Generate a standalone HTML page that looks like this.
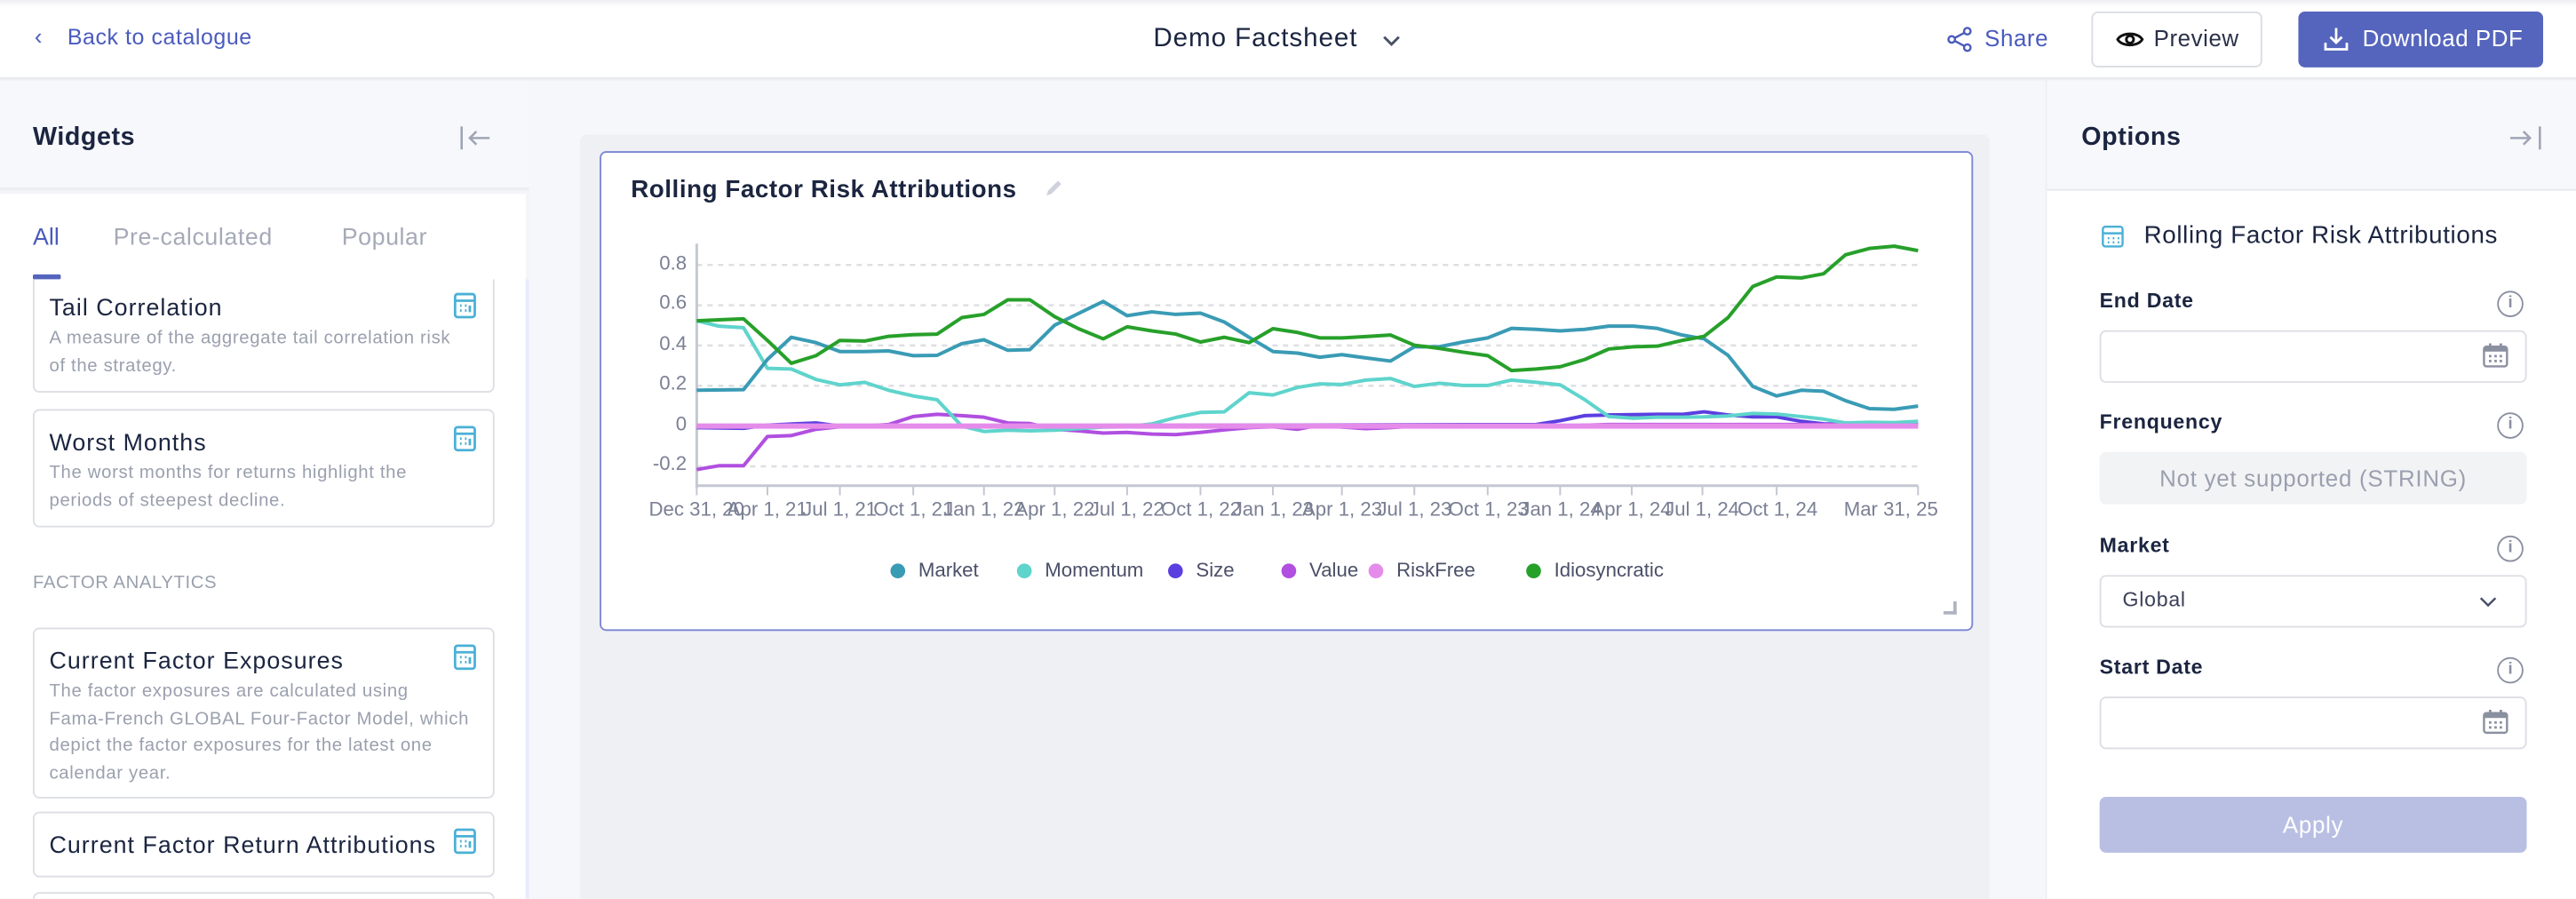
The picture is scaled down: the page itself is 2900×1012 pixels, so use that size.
<!DOCTYPE html>
<html><head><meta charset="utf-8">
<style>
*{box-sizing:border-box;margin:0;padding:0}
html,body{width:2900px;height:1012px;overflow:hidden;background:#f4f5f8}
body{font-family:"Liberation Sans",sans-serif;position:relative;line-height:1.4}
#w{position:absolute;left:0;top:0;width:1568px;height:547px;overflow:hidden;transform:scale(1.84949);transform-origin:0 0;}
.a{position:absolute;white-space:nowrap}
.card{position:absolute;left:20px;width:281px;background:#fff;border:1px solid #dcdee4;border-radius:4px}
.card .t{position:absolute;left:9px;font-size:14.5px;color:#1b2540;letter-spacing:.55px}
.card .d{position:absolute;left:9px;font-size:11px;line-height:16.5px;color:#9aa0ae;white-space:nowrap;letter-spacing:.35px}
.ci{position:absolute;right:10px;top:7px}
.lbl{position:absolute;left:1278px;font-size:12.5px;color:#1b2540;font-weight:bold;letter-spacing:.4px}
.inp{position:absolute;left:1278px;width:260px;height:32px;border:1px solid #dcdee4;border-radius:4px;background:#fff}
.info{position:absolute;left:1520px;width:16px;height:16px;border:1.5px solid #8a90a0;border-radius:50%;font-size:10px;color:#8a90a0;text-align:center;line-height:13px;font-weight:bold}
.xl{position:absolute;top:302px;font-size:12px;color:#7a8094;transform:translateX(-50%);white-space:nowrap}
.yl{position:absolute;left:380px;width:38px;text-align:right;font-size:12px;color:#7a8094}
.lg{position:absolute;top:339px;font-size:12px;color:#4a5068}
.lg i{display:inline-block;width:9px;height:9px;border-radius:50%;margin-right:8px;vertical-align:-1px}
</style></head><body>
<div id="w">
<!-- header -->
<div class="a" style="left:0;top:0;width:1568px;height:48px;background:#fff;border-bottom:1px solid #e6e8ee;box-shadow:0 1px 3px rgba(0,0,0,.05)"></div>
<div class="a" style="left:0;top:0;width:1568px;height:4px;background:linear-gradient(#eeeff2,#fff)"></div>
<div class="a" style="left:21px;top:13px;font-size:14px;color:#4a5bbd">‹</div>
<div class="a" style="left:41px;top:14px;font-size:13.5px;color:#4a5bbd;letter-spacing:.3px">Back to catalogue</div>
<div class="a" style="left:702px;top:13px;font-size:16px;color:#1b2540;letter-spacing:.5px">Demo Factsheet</div>
<svg class="a" style="left:841px;top:21px" width="12" height="8" viewBox="0 0 12 8"><path d="M1.5 1.5L6 6l4.5-4.5" fill="none" stroke="#4a5068" stroke-width="1.6"/></svg>
<svg class="a" style="left:1185px;top:16px" width="16" height="16" viewBox="0 0 16 16" fill="none" stroke="#4a5bbd" stroke-width="1.3"><circle cx="3" cy="8" r="2"/><circle cx="12.5" cy="3" r="2"/><circle cx="12.5" cy="13" r="2"/><path d="M5 7l5.7-3M5 9l5.7 3"/></svg>
<div class="a" style="left:1208px;top:14px;font-size:14px;color:#4a5bbd;letter-spacing:.3px">Share</div>
<div class="a" style="left:1273px;top:7px;width:104px;height:34px;border:1px solid #d9dce3;border-radius:4px;background:#fff"></div>
<svg class="a" style="left:1288px;top:17px" width="17" height="14" viewBox="0 0 17 14" fill="none" stroke="#111" stroke-width="1.6"><path d="M1 7C3.5 2.5 13.5 2.5 16 7C13.5 11.5 3.5 11.5 1 7z"/><circle cx="8.5" cy="7" r="2.2"/></svg>
<div class="a" style="left:1311px;top:14px;font-size:14px;color:#2a3048;letter-spacing:.3px">Preview</div>
<div class="a" style="left:1399px;top:7px;width:149px;height:34px;border-radius:4px;background:#5565bd"></div>
<svg class="a" style="left:1414px;top:16px" width="16" height="16" viewBox="0 0 16 16" fill="none" stroke="#fff" stroke-width="1.5"><path d="M8 1v9M4.5 6.5L8 10l3.5-3.5M1.5 10v4h13v-4"/></svg>
<div class="a" style="left:1438px;top:14px;font-size:14px;color:#fff;letter-spacing:.3px">Download PDF</div>

<!-- left panel -->
<div class="a" style="left:0;top:49px;width:322px;height:67px;background:#f7f8fb;border-bottom:2px solid #eceef2"></div>
<div class="a" style="left:20px;top:73px;font-size:15.5px;font-weight:bold;color:#1b2540;letter-spacing:.3px">Widgets</div>
<svg class="a" style="left:280px;top:76px" width="20" height="16" viewBox="0 0 20 16" fill="none" stroke="#a0a5b5" stroke-width="1.4"><path d="M1 1v14M18 8H6M10 4L6 8l4 4"/></svg>
<div class="a" style="left:0;top:118px;width:320px;height:429px;background:#fff"></div>
<div class="a" style="left:20px;top:135px;font-size:14.5px;color:#4a5bbd">All</div>
<div class="a" style="left:69px;top:135px;font-size:14.5px;color:#a5aab8;letter-spacing:.3px">Pre-calculated</div>
<div class="a" style="left:208px;top:135px;font-size:14.5px;color:#a5aab8;letter-spacing:.3px">Popular</div>
<div class="a" style="left:320px;top:170px;width:4px;height:377px;background:#e8ebfa"></div>
<div class="a" style="left:0;top:170px;width:320px;height:377px;overflow:hidden">
 <div class="card" style="top:-8px;height:77px"><div class="t" style="top:15px">Tail Correlation</div><div class="d" style="top:35px">A measure of the aggregate tail correlation risk<br>of the strategy.</div><svg class="ci" style="top:15px" width="14" height="16" viewBox="0 0 14 16" fill="none" stroke="#4ab0d6" stroke-width="1.5"><rect x="1" y="1" width="12" height="14" rx="1.5"/><path d="M1 5h12M4 8h1M7 8h1M10 8v4M4 11h1M7 11h1"/></svg></div>
 <div class="card" style="top:79px;height:72px"><div class="t" style="top:10px">Worst Months</div><div class="d" style="top:30px">The worst months for returns highlight the<br>periods of steepest decline.</div><svg class="ci" style="top:9px" width="14" height="16" viewBox="0 0 14 16" fill="none" stroke="#4ab0d6" stroke-width="1.5"><rect x="1" y="1" width="12" height="14" rx="1.5"/><path d="M1 5h12M4 8h1M7 8h1M10 8v4M4 11h1M7 11h1"/></svg></div>
 <div class="a" style="left:20px;top:178px;font-size:11px;color:#9aa0ae;letter-spacing:.3px">FACTOR ANALYTICS</div>
 <div class="card" style="top:212px;height:104px"><div class="t" style="top:10px">Current Factor Exposures</div><div class="d" style="top:30px">The factor exposures are calculated using<br>Fama-French GLOBAL Four-Factor Model, which<br>depict the factor exposures for the latest one<br>calendar year.</div><svg class="ci" style="top:9px" width="14" height="16" viewBox="0 0 14 16" fill="none" stroke="#4ab0d6" stroke-width="1.5"><rect x="1" y="1" width="12" height="14" rx="1.5"/><path d="M1 5h12M4 8h1M7 8h1M10 8v4M4 11h1M7 11h1"/></svg></div>
 <div class="card" style="top:324px;height:40px"><div class="t" style="top:10px">Current Factor Return Attributions</div><svg class="ci" style="top:9px" width="14" height="16" viewBox="0 0 14 16" fill="none" stroke="#4ab0d6" stroke-width="1.5"><rect x="1" y="1" width="12" height="14" rx="1.5"/><path d="M1 5h12M4 8h1M7 8h1M10 8v4M4 11h1M7 11h1"/></svg></div>
 <div class="card" style="top:373px;height:40px"></div>
</div>
<div class="a" style="left:20px;top:167px;width:17px;height:3px;background:#5565bd;border-radius:1px"></div>

<!-- middle -->
<div class="a" style="left:322px;top:49px;width:923px;height:498px;background:#f6f7fa"></div>
<div class="a" style="left:353px;top:82px;width:858px;height:465px;background:#eef0f4;border-radius:4px 4px 0 0"></div>
<div class="a" style="left:365px;top:92px;width:836px;height:292px;background:#fff;border:1px solid #7a86d4;border-radius:4px"></div>
<div class="a" style="left:384px;top:105px;font-size:15px;font-weight:bold;color:#1b2540;letter-spacing:.3px">Rolling Factor Risk Attributions</div>
<svg class="a" style="left:635px;top:109px" width="12" height="12" viewBox="0 0 12 12"><path d="M2 10l1-3 6-6 2 2-6 6z" fill="#cfd2da"/></svg>
<div class="yl" style="top:152px">0.8</div><div class="yl" style="top:176px">0.6</div><div class="yl" style="top:201px">0.4</div><div class="yl" style="top:225px">0.2</div><div class="yl" style="top:250px">0</div><div class="yl" style="top:274px">-0.2</div>
<div class="xl" style="left:424px">Dec 31, 20</div><div class="xl" style="left:467px">Apr 1, 21</div><div class="xl" style="left:511px">Jul 1, 21</div><div class="xl" style="left:556px">Oct 1, 21</div><div class="xl" style="left:599px">Jan 1, 22</div><div class="xl" style="left:642px">Apr 1, 22</div><div class="xl" style="left:686px">Jul 1, 22</div><div class="xl" style="left:731px">Oct 1, 22</div><div class="xl" style="left:775px">Jan 1, 23</div><div class="xl" style="left:817px">Apr 1, 23</div><div class="xl" style="left:861px">Jul 1, 23</div><div class="xl" style="left:906px">Oct 1, 23</div><div class="xl" style="left:950px">Jan 1, 24</div><div class="xl" style="left:993px">Apr 1, 24</div><div class="xl" style="left:1036px">Jul 1, 24</div><div class="xl" style="left:1082px">Oct 1, 24</div><div class="xl" style="left:1151px">Mar 31, 25</div>
<div class="lg" style="left:542px"><i style="background:#3a9bb5"></i>Market</div>
<div class="lg" style="left:619px"><i style="background:#5fd4cc"></i>Momentum</div>
<div class="lg" style="left:711px"><i style="background:#5b3fe0"></i>Size</div>
<div class="lg" style="left:780px"><i style="background:#b04fe0"></i>Value</div>
<div class="lg" style="left:833px"><i style="background:#e58cea"></i>RiskFree</div>
<div class="lg" style="left:929px"><i style="background:#27a02a"></i>Idiosyncratic</div>
<div class="a" style="left:1183px;top:366px;width:8px;height:8px;border-right:2px solid #b0b4c0;border-bottom:2px solid #b0b4c0"></div>

<!-- right panel -->
<div class="a" style="left:1245px;top:49px;width:323px;height:498px;background:#fff;border-left:1px solid #eceef2"></div>
<div class="a" style="left:1246px;top:49px;width:322px;height:67px;background:#f7f8fb;border-bottom:1px solid #e6e8ee"></div>
<div class="a" style="left:1267px;top:73px;font-size:15.5px;font-weight:bold;color:#1b2540;letter-spacing:.3px">Options</div>
<svg class="a" style="left:1527px;top:76px" width="20" height="16" viewBox="0 0 20 16" fill="none" stroke="#a0a5b5" stroke-width="1.4"><path d="M19 1v14M1 8h12M9 4l4 4-4 4"/></svg>
<svg class="a" style="left:1279px;top:137px" width="14" height="14" viewBox="0 0 14 14" fill="none" stroke="#4ab0d6" stroke-width="1.3"><rect x="1" y="1" width="12" height="12" rx="1.5"/><path d="M1 5h12M4 8h1M7 8h1M10 8h1M4 10.5h1M7 10.5h1M10 10.5h1"/></svg>
<div class="a" style="left:1305px;top:133px;font-size:15px;color:#1b2540;letter-spacing:.35px">Rolling Factor Risk Attributions</div>
<div class="lbl" style="top:175px">End Date</div><div class="info" style="top:177px">i</div>
<div class="inp" style="top:201px"></div>
<svg class="a" style="left:1511px;top:209px" width="16" height="15" viewBox="0 0 16 15" fill="#8a90a0"><rect x="1" y="2" width="14" height="12" rx="1.5" fill="none" stroke="#8a90a0" stroke-width="1.3"/><rect x="1" y="2" width="14" height="3"/><rect x="4" y="0" width="1.5" height="3"/><rect x="10.5" y="0" width="1.5" height="3"/><rect x="4" y="7" width="1.5" height="1.5"/><rect x="7.3" y="7" width="1.5" height="1.5"/><rect x="10.5" y="7" width="1.5" height="1.5"/><rect x="4" y="10" width="1.5" height="1.5"/><rect x="7.3" y="10" width="1.5" height="1.5"/><rect x="10.5" y="10" width="1.5" height="1.5"/></svg>
<div class="lbl" style="top:249px">Frenquency</div><div class="info" style="top:251px">i</div>
<div class="a" style="left:1278px;top:275px;width:260px;height:32px;background:#f2f3f5;border-radius:4px;text-align:center;line-height:32px;font-size:14px;color:#9aa0ae;letter-spacing:.4px">Not yet supported (STRING)</div>
<div class="lbl" style="top:324px">Market</div><div class="info" style="top:326px">i</div>
<div class="inp" style="top:350px"></div>
<div class="a" style="left:1292px;top:357px;font-size:12.5px;color:#3a4058;letter-spacing:.4px">Global</div>
<svg class="a" style="left:1509px;top:363px" width="11" height="7" viewBox="0 0 11 7"><path d="M1 1l4.5 4.5L10 1" fill="none" stroke="#4a5068" stroke-width="1.3"/></svg>
<div class="lbl" style="top:398px">Start Date</div><div class="info" style="top:400px">i</div>
<div class="inp" style="top:424px"></div>
<svg class="a" style="left:1511px;top:432px" width="16" height="15" viewBox="0 0 16 15" fill="#8a90a0"><rect x="1" y="2" width="14" height="12" rx="1.5" fill="none" stroke="#8a90a0" stroke-width="1.3"/><rect x="1" y="2" width="14" height="3"/><rect x="4" y="0" width="1.5" height="3"/><rect x="10.5" y="0" width="1.5" height="3"/><rect x="4" y="7" width="1.5" height="1.5"/><rect x="7.3" y="7" width="1.5" height="1.5"/><rect x="10.5" y="7" width="1.5" height="1.5"/><rect x="4" y="10" width="1.5" height="1.5"/><rect x="7.3" y="10" width="1.5" height="1.5"/><rect x="10.5" y="10" width="1.5" height="1.5"/></svg>
<div class="a" style="left:1278px;top:485px;width:260px;height:34px;background:#b9bfe3;border-radius:4px;text-align:center;line-height:34px;font-size:14px;color:#fff;letter-spacing:.4px">Apply</div>
</div>

<!-- chart lines (original pixel coords) -->
<svg style="position:absolute;left:660px;top:160px" width="1560" height="560" viewBox="0 0 1568 1568" preserveAspectRatio="none" fill="none" stroke-linejoin="round">
<path d="M125 387H1507M125 514H1507M125 641H1507M125 768H1507M125 1022H1507" stroke="#dedfe3" stroke-width="2.5" stroke-dasharray="6 6" vector-effect="non-scaling-stroke"/>
<path d="M125 320V1090M125 1083H1507" stroke="#c5c8d2" stroke-width="3" vector-effect="non-scaling-stroke"/>
<path d="M205 1083v30M287 1083v30M370 1083v30M450 1083v30M530 1083v30M612 1083v30M695 1083v30M777 1083v30M855 1083v30M937 1083v30M1020 1083v30M1102 1083v30M1183 1083v30M1263 1083v30M1347 1083v30M1507 1083v30M125 1083v30" stroke="#c5c8d2" stroke-width="2" vector-effect="non-scaling-stroke"/>
<g stroke-width="4">
<polyline vector-effect="non-scaling-stroke" stroke="#5b3fe0" points="125,900 178,902 205,892 260,885 287,895 1075,890 1102,878 1130,862 1157,860 1212,858 1240,858 1265,850 1292,860 1320,866 1347,866 1375,880 1400,888 1507,890"/>
<polyline vector-effect="non-scaling-stroke" stroke="#b04fe0" points="125,1032 150,1020 178,1020 205,928 232,925 260,905 287,897 315,895 342,890 370,865 397,858 425,862 450,867 477,885 502,887 530,905 557,910 585,917 612,915 640,920 667,922 695,915 722,907 750,900 777,897 805,905 830,892 855,898 882,903 910,900 937,895 1000,893 1075,893 1102,895 1157,890 1212,890 1507,890"/>
<polyline vector-effect="non-scaling-stroke" stroke="#5fd4cc" points="125,563 150,580 178,585 205,713 232,715 260,748 287,765 315,757 342,782 370,800 397,812 425,895 450,912 477,908 502,910 530,908 557,903 585,898 612,897 640,888 667,868 695,852 722,850 750,790 777,797 805,773 830,762 855,764 882,750 910,745 937,770 965,760 992,767 1020,767 1047,750 1075,757 1102,765 1130,812 1157,865 1185,870 1212,867 1240,867 1265,866 1292,863 1320,855 1347,857 1375,865 1400,873 1425,885 1452,883 1480,884 1507,880"/>
<polyline vector-effect="non-scaling-stroke" stroke="#e58cea" stroke-width="6" points="125,895 1507,895"/>
<polyline vector-effect="non-scaling-stroke" stroke="#3a9bb5" points="125,782 178,780 205,685 232,615 260,632 287,660 315,660 342,658 370,673 397,672 425,635 450,623 477,656 502,654 530,577 557,540 585,502 612,547 640,535 667,543 695,539 722,567 750,615 777,660 805,665 830,678 855,670 882,680 910,690 937,645 965,645 992,630 1020,617 1047,587 1075,590 1102,595 1130,590 1157,580 1185,580 1212,587 1240,608 1265,620 1292,672 1320,770 1347,800 1375,782 1400,785 1425,815 1452,840 1480,842 1507,832"/>
<polyline vector-effect="non-scaling-stroke" stroke="#27a02a" points="125,563 150,560 178,557 205,625 232,697 260,673 287,625 315,627 342,612 370,607 397,605 425,553 450,543 477,497 502,497 530,550 557,588 585,620 612,582 640,595 667,605 695,630 722,615 750,632 777,588 805,600 830,617 855,617 882,613 910,608 937,640 965,650 992,662 1020,673 1047,720 1075,715 1102,708 1130,685 1157,652 1185,645 1212,643 1240,625 1265,612 1292,553 1320,455 1347,425 1375,428 1400,415 1425,355 1452,335 1480,328 1507,342"/>
</g>
</svg>
</body></html>
